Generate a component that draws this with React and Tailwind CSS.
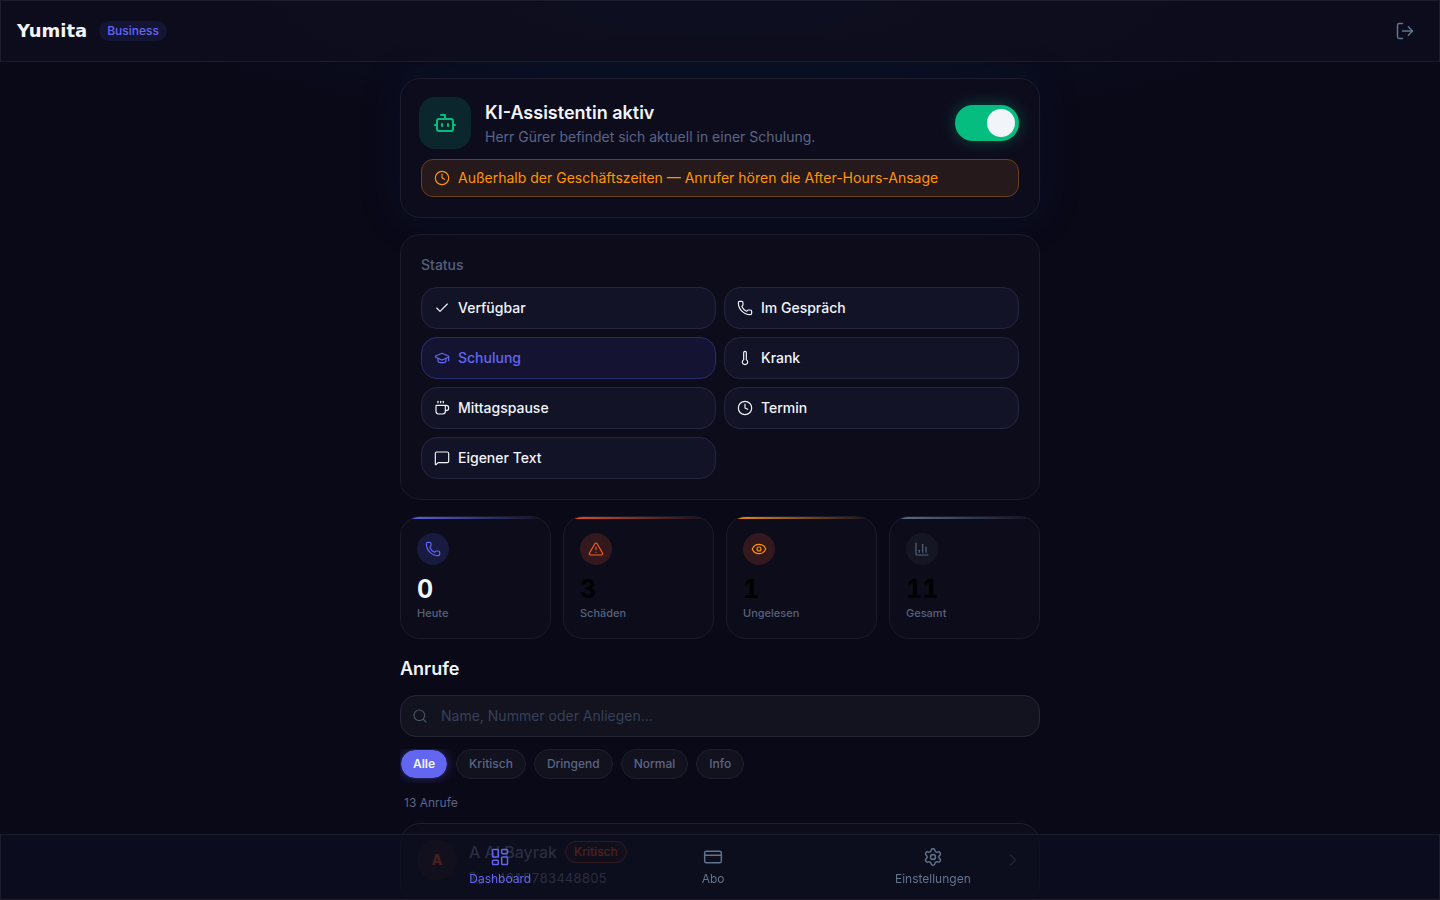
import { useState } from 'react';
import {
  Bot,
  ChartColumn,
  Check,
  ChevronRight,
  Clock,
  Coffee,
  CreditCard,
  Eye,
  GraduationCap,
  LayoutDashboard,
  LogOut,
  MessageSquare,
  Phone,
  Search,
  Settings,
  Thermometer,
  TriangleAlert,
} from 'lucide-react';

const statusOptions = [
  { id: 'available', label: 'Verfügbar', icon: Check },
  { id: 'call', label: 'Im Gespräch', icon: Phone },
  { id: 'training', label: 'Schulung', icon: GraduationCap },
  { id: 'sick', label: 'Krank', icon: Thermometer },
  { id: 'lunch', label: 'Mittagspause', icon: Coffee },
  { id: 'meeting', label: 'Termin', icon: Clock },
  { id: 'custom', label: 'Eigener Text', icon: MessageSquare },
];

const stats = [
  { label: 'Heute', value: 0, icon: Phone, line: 'from-[#6366f1]', badge: 'bg-[#191a3f] text-[#6366f1]', number: 'text-slate-100' },
  { label: 'Schäden', value: 3, icon: TriangleAlert, line: 'from-[#f4511e]', badge: 'bg-[#33191d] text-[#ff5a1f]', number: 'text-black' },
  { label: 'Ungelesen', value: 1, icon: Eye, line: 'from-[#ff9500]', badge: 'bg-[#33191d] text-[#ff9500]', number: 'text-black' },
  { label: 'Gesamt', value: 11, icon: ChartColumn, line: 'from-[#64748b]', badge: 'bg-[#151624] text-[#56627a]', number: 'text-black' },
];

const filters = ['Alle', 'Kritisch', 'Dringend', 'Normal', 'Info'];

const navItems = [
  { label: 'Dashboard', icon: LayoutDashboard },
  { label: 'Abo', icon: CreditCard },
  { label: 'Einstellungen', icon: Settings },
];

const Header = () => (
  <header className="sticky top-0 z-20 flex items-center justify-between border border-[#1d1d2c] bg-[#0f0e1e]/75 px-4 py-3">
    <div className="flex items-center gap-3">
      <span className="font-['DejaVu_Sans',sans-serif] text-lg leading-7 font-bold text-slate-100">Yumita</span>
      <span className="rounded-full bg-[#141533] px-2 py-0.5 text-xs font-medium text-[#6366f1]">Business</span>
    </div>
    <button type="button" aria-label="Abmelden" className="rounded-lg p-2 text-slate-500">
      <LogOut size={20} strokeWidth={1.75} />
    </button>
  </header>
);

const AssistantCard = () => {
  const [active, setActive] = useState(true);

  return (
    <section className="rounded-[20px] border border-[#1d1d2d] bg-[#0d0c1d] p-5 shadow-[0_0_40px_rgba(8,40,80,0.22)]">
      <div className="flex items-center gap-4">
        <div className="-m-0.5 flex size-13 shrink-0 items-center justify-center rounded-2xl bg-[#0b272d] text-[#05bd7e]">
          <Bot size={24} strokeWidth={2} />
        </div>
        <div className="min-w-0 flex-1">
          <h2 className="text-lg leading-7 font-semibold text-slate-100">KI-Assistentin aktiv</h2>
          <p className="text-sm text-[#5b6585]">Herr Gürer befindet sich aktuell in einer Schulung.</p>
        </div>
        <button
          type="button"
          role="switch"
          aria-checked={active}
          aria-label="KI-Assistentin"
          onClick={() => setActive(!active)}
          className={`flex h-9 w-16 items-center rounded-full px-1 ${
            active ? 'justify-end bg-[#05bd7e] shadow-[0_0_16px_rgba(5,189,126,0.35)]' : 'justify-start bg-slate-700'
          }`}
        >
          <span className="size-7 rounded-full bg-slate-100" />
        </button>
      </div>
      <div className="mt-3 flex items-center gap-2 rounded-xl border border-[#6b3f14] bg-[#25191b] px-3 py-2 text-sm text-[#ff9500]">
        <Clock size={16} strokeWidth={1.75} />
        <span>Außerhalb der Geschäftszeiten — Anrufer hören die After-Hours-Ansage</span>
      </div>
    </section>
  );
};

const StatusCard = () => {
  const [current, setCurrent] = useState('training');

  return (
    <section className="rounded-[20px] border border-[#1b1b2b] bg-[#0d0c1b] p-5">
      <h3 className="mb-3 text-sm font-medium text-[#55607a]">Status</h3>
      <div className="grid grid-cols-2 gap-2">
        {statusOptions.map(({ id, label, icon: Icon }) => (
          <button
            key={id}
            type="button"
            onClick={() => setCurrent(id)}
            className={`flex items-center gap-2 rounded-2xl border px-3 py-2.5 text-sm font-medium ${
              current === id
                ? 'border-[#2a2d70] bg-[#141432] text-[#6366f1]'
                : 'border-[#25253f] bg-[#131328] text-slate-100'
            }`}
          >
            <Icon size={16} strokeWidth={1.75} />
            {label}
          </button>
        ))}
      </div>
    </section>
  );
};

const Stats = () => (
  <section className="grid grid-cols-4 gap-3">
    {stats.map(({ label, value, icon: Icon, line, badge, number }) => (
      <div key={label} className="relative overflow-hidden rounded-[20px] border border-[#1b1b2b] bg-[#0d0c1b] p-4">
        <div className={`absolute inset-x-0 top-0 h-0.5 bg-linear-to-r to-transparent ${line}`} />
        <div className={`mb-2 flex size-8 items-center justify-center rounded-full ${badge}`}>
          <Icon size={16} strokeWidth={1.75} />
        </div>
        <p className={`text-[25px] leading-8 font-bold tabular-nums ${number}`}>{value}</p>
        <p className="text-[11px] leading-[17px] font-medium text-[#56627a]">{label}</p>
      </div>
    ))}
  </section>
);

const Calls = () => {
  const [filter, setFilter] = useState('Alle');

  return (
    <section>
      <h2 className="mb-3 text-lg leading-7 font-semibold text-slate-100">Anrufe</h2>
      <div className="relative">
        <Search size={16} strokeWidth={1.75} className="absolute top-1/2 left-3 -translate-y-1/2 text-[#475569]" />
        <input
          type="text"
          aria-label="Anrufe durchsuchen"
          placeholder="Name, Nummer oder Anliegen..."
          className="block w-full rounded-2xl border border-[#252533] bg-[#13121f] py-2.5 pr-4 pl-10 text-sm text-slate-100 outline-none placeholder:text-[#364156]"
        />
      </div>
      <div className="mt-3 flex gap-2 overflow-hidden pb-1">
        {filters.map((name) => (
          <button
            key={name}
            type="button"
            onClick={() => setFilter(name)}
            className={`rounded-full border px-3 py-1.5 text-xs font-medium ${
              filter === name
                ? 'border-[#1f2050] bg-[#6366f1] bg-clip-padding font-semibold text-slate-100 shadow-[0_0_12px_rgba(99,102,241,0.3)]'
                : 'border-[#1f1f2d] bg-[#12111e] text-[#5b6585]'
            }`}
          >
            {name}
          </button>
        ))}
      </div>
      <p className="my-3 px-1 text-xs text-[#5b6585]">13 Anrufe</p>
      <article className="flex items-center gap-3 rounded-[20px] border border-[#1f1f30] bg-[#0d0c1b] p-4">
        <div className="flex size-10 shrink-0 items-center justify-center self-start rounded-full bg-[#2a1a1c] text-sm font-bold text-[#ff5a2f]">A</div>
        <div className="min-w-0 flex-1">
          <div className="flex items-center gap-2">
            <h3 className="text-base font-medium text-[#818ba0]">A Al Bayrak</h3>
            <span className="rounded-full border border-[#a8421f] bg-[#25161b] px-2 py-0.5 text-xs font-medium text-[#ff5a1f]">Kritisch</span>
          </div>
          <p className="mt-1 flex items-center gap-1.5 text-[13px] leading-5 text-[#818ba0] tabular-nums">
            <Phone size={14} strokeWidth={1.75} />
            +4915783448805
          </p>
        </div>
        <ChevronRight size={20} strokeWidth={1.5} className="mb-2 shrink-0 text-slate-500" />
      </article>
    </section>
  );
};

const BottomNav = () => {
  const [tab, setTab] = useState('Dashboard');

  return (
    <nav className="fixed inset-x-0 bottom-0 z-20 border border-[#1d1d2c] bg-[#0c0d1f]/75 py-3">
      <div className="mx-auto flex max-w-2xl justify-around">
        {navItems.map(({ label, icon: Icon }) => (
          <a
            key={label}
            href="#"
            onClick={() => setTab(label)}
            className={`flex flex-col items-center gap-1 px-4 text-xs ${tab === label ? 'text-[#6366f1]' : 'text-slate-500'}`}
          >
            <Icon size={20} strokeWidth={1.75} />
            {label}
          </a>
        ))}
      </div>
    </nav>
  );
};

export default function App() {
  return (
    <div className="min-h-screen bg-[#0a0918] bg-[radial-gradient(ellipse_600px_130px_at_50%_0,rgba(8,28,56,0.5),transparent)] bg-no-repeat font-[Inter,sans-serif]">
      <Header />
      <main className="mx-auto flex max-w-2xl flex-col gap-4 px-4 pt-4 pb-24">
        <AssistantCard />
        <StatusCard />
        <Stats />
        <Calls />
      </main>
      <BottomNav />
    </div>
  );
}
